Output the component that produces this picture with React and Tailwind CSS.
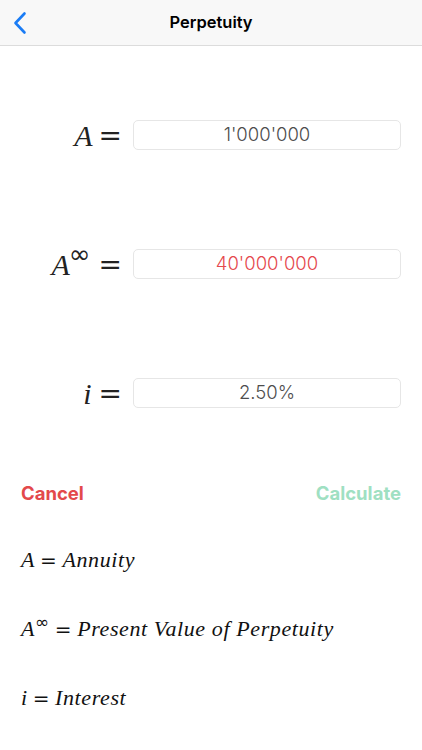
import React from "react";

const math = { fontFamily: '"Liberation Serif", "DejaVu Serif", serif' };
const sym = { fontFamily: '"DejaVu Sans", sans-serif', fontStyle: "normal" };

function Row({ label, value, valueClass }) {
  return (
    <div className="flex items-center h-[30px]">
      <div className="w-[122px] flex justify-end items-center text-[30px] text-[#222] leading-none pt-[2px]" style={math}>
        {label}
      </div>
      <div className="ml-[11px] mr-[21px] flex-1 h-[30px] rounded-[5px] border border-[#e6e6e6] flex items-center justify-center">
        <span className={`text-[18.5px] font-light ${valueClass}`} style={{ fontFamily: 'Inter, "Liberation Sans", sans-serif' }}>
          {value}
        </span>
      </div>
    </div>
  );
}

export default function App() {
  return (
    <div className="w-[422px] h-[750px] bg-white overflow-hidden" style={{ fontFamily: 'Inter, "Liberation Sans", sans-serif' }}>
      <div className="h-[46px] bg-[#f8f8f8] border-b border-[#dcdcdc] relative flex items-center justify-center">
        <svg className="absolute left-[12px] top-[11px]" width="16" height="24" viewBox="0 0 16 24" fill="none">
          <path d="M12.5 2.5 L3.5 12 L12.5 21.5" stroke="#1a7cf5" strokeWidth="2.6" strokeLinecap="round" strokeLinejoin="round" />
        </svg>
        <span className="text-[16.5px] font-semibold text-black">Perpetuity</span>
      </div>

      <div className="pt-[74px] flex flex-col gap-[99px]">
        <Row label={<><i>A</i><span className="ml-[6px] text-[28px]" style={sym}>=</span></>} value="1'000'000" valueClass="text-[#4d4d4d]" />
        <Row label={<><i>A</i><span className="text-[26px] relative -top-[11px] -ml-[1px]" style={sym}>∞</span><span className="ml-[8px] text-[28px]" style={sym}>=</span></>} value="40'000'000" valueClass="text-[#e5484d]" />
        <Row label={<><i>i</i><span className="ml-[7px] text-[28px]" style={sym}>=</span></>} value="2.50%" valueClass="text-[#4d4d4d]" />
      </div>

      <div className="mt-[72px] px-[21px] flex justify-between items-center">
        <span className="text-[18.5px] font-bold text-[#e3494b]">Cancel</span>
        <span className="text-[18.5px] font-bold text-[#9fe0c2]">Calculate</span>
      </div>

      <div className="px-[21px] mt-[40px] flex flex-col gap-[45px] text-[22px] text-[#111] tracking-[0.6px]" style={math}>
        <div className="h-[24px] flex items-center"><i>A</i><span className="mx-[5px] text-[20px]" style={sym}>=</span><i>Annuity</i></div>
        <div className="h-[24px] flex items-center"><i>A</i><span className="text-[17px] relative -top-[6px]" style={sym}>∞</span><span className="mx-[5px] text-[20px]" style={sym}>=</span><i>Present Value of Perpetuity</i></div>
        <div className="h-[24px] flex items-center"><i>i</i><span className="mx-[5px] text-[20px]" style={sym}>=</span><i>Interest</i></div>
      </div>
    </div>
  );
}
